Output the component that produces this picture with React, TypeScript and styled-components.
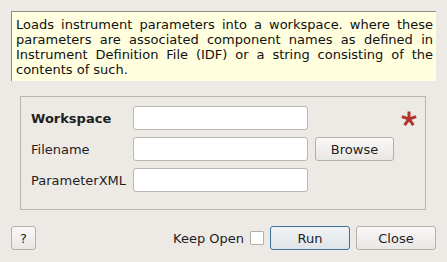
import React from 'react';
import styled, { createGlobalStyle } from 'styled-components';

const GlobalStyle = createGlobalStyle`
  html, body {
    margin: 0;
    padding: 0;
    background: #edeae6;
  }
  body {
    font-family: 'DejaVu Sans', 'Liberation Sans', sans-serif;
    font-size: 13px;
    color: #1e1e1e;
  }
`;

const Dialog = styled.div`
  width: 447px;
  height: 262px;
  box-sizing: border-box;
  padding: 11px 11px 0 11px;
  display: flex;
  flex-direction: column;
  background: #edeae6;
`;

const Description = styled.div`
  height: 70px;
  box-sizing: border-box;
  padding: 5px 3px 0 4px;
  background: #ffffdf;
  border-top: 1px solid #8e8c88;
  border-left: 1px solid #8e8c88;
  line-height: 15px;
  text-align: justify;
  color: #111;
`;

const GroupBox = styled.div`
  margin: 15px 10px 0 9px;
  height: 114px;
  box-sizing: border-box;
  border: 1px solid #b9b5b0;
  padding: 9px 0 0 10px;
  display: grid;
  grid-template-columns: 95px 175px 79px auto;
  grid-auto-rows: 24px;
  column-gap: 7px;
  row-gap: 7px;
  align-items: center;
`;

const Label = styled.span<{ $bold?: boolean }>`
  font-weight: ${p => (p.$bold ? 'bold' : 'normal')};
  white-space: nowrap;
`;

const TextInput = styled.div`
  height: 24px;
  box-sizing: border-box;
  background: #fff;
  border: 1px solid #bab6b0;
  border-radius: 3px;
`;

const Button = styled.button<{ $primary?: boolean; $w: number }>`
  width: ${p => p.$w}px;
  height: 24px;
  box-sizing: border-box;
  padding: 0;
  font-family: inherit;
  font-size: 13px;
  color: #1e1e1e;
  border-radius: 3px;
  border: 1px solid ${p => (p.$primary ? '#3d729f' : '#b3afa9')};
  background: ${p =>
    p.$primary
      ? 'linear-gradient(#f1f3f5, #dfe4e8)'
      : 'linear-gradient(#f9f8f7, #e9e7e4)'};
`;

const Required = styled.div`
  display: flex;
  justify-content: flex-start;
`;

const Footer = styled.div`
  margin-top: 16px;
  display: flex;
  align-items: center;
  height: 24px;
`;

const Spacer = styled.div`
  flex: 1;
`;

const KeepOpen = styled.label`
  display: flex;
  align-items: center;
  gap: 6px;
  margin-right: 6px;
`;

const CheckBox = styled.span`
  width: 14px;
  height: 14px;
  box-sizing: border-box;
  background: #fff;
  border: 1px solid #b3afa9;
  border-radius: 1px;
`;

const Buttons = styled.div`
  display: flex;
  gap: 6px;
`;

function Asterisk() {
  const arms = [0, 72, 144, 216, 288];
  return (
    <svg width="16" height="15" viewBox="-8 -8 16 15">
      {arms.map(a => (
        <line
          key={a}
          x1="0"
          y1="0"
          x2="0"
          y2="-7.5"
          stroke="#b0352c"
          strokeWidth="3"
          strokeLinecap="butt"
          transform={`rotate(${a})`}
        />
      ))}
    </svg>
  );
}

export default function App() {
  return (
    <>
      <GlobalStyle />
      <Dialog>
        <Description>
          Loads instrument parameters into a workspace. where these parameters are associated
          component names as defined in Instrument Definition File (IDF) or a string consisting of
          the contents of such.
        </Description>
        <GroupBox>
          <Label $bold>Workspace</Label>
          <TextInput />
          <span />
          <Required>
            <Asterisk />
          </Required>

          <Label>Filename</Label>
          <TextInput />
          <Button $w={79}>Browse</Button>
          <span />

          <Label>ParameterXML</Label>
          <TextInput />
        </GroupBox>
        <Footer>
          <Button $w={25}>?</Button>
          <Spacer />
          <KeepOpen>
            Keep Open
            <CheckBox />
          </KeepOpen>
          <Buttons>
            <Button $primary $w={80}>
              Run
            </Button>
            <Button $w={80}>Close</Button>
          </Buttons>
        </Footer>
      </Dialog>
    </>
  );
}
